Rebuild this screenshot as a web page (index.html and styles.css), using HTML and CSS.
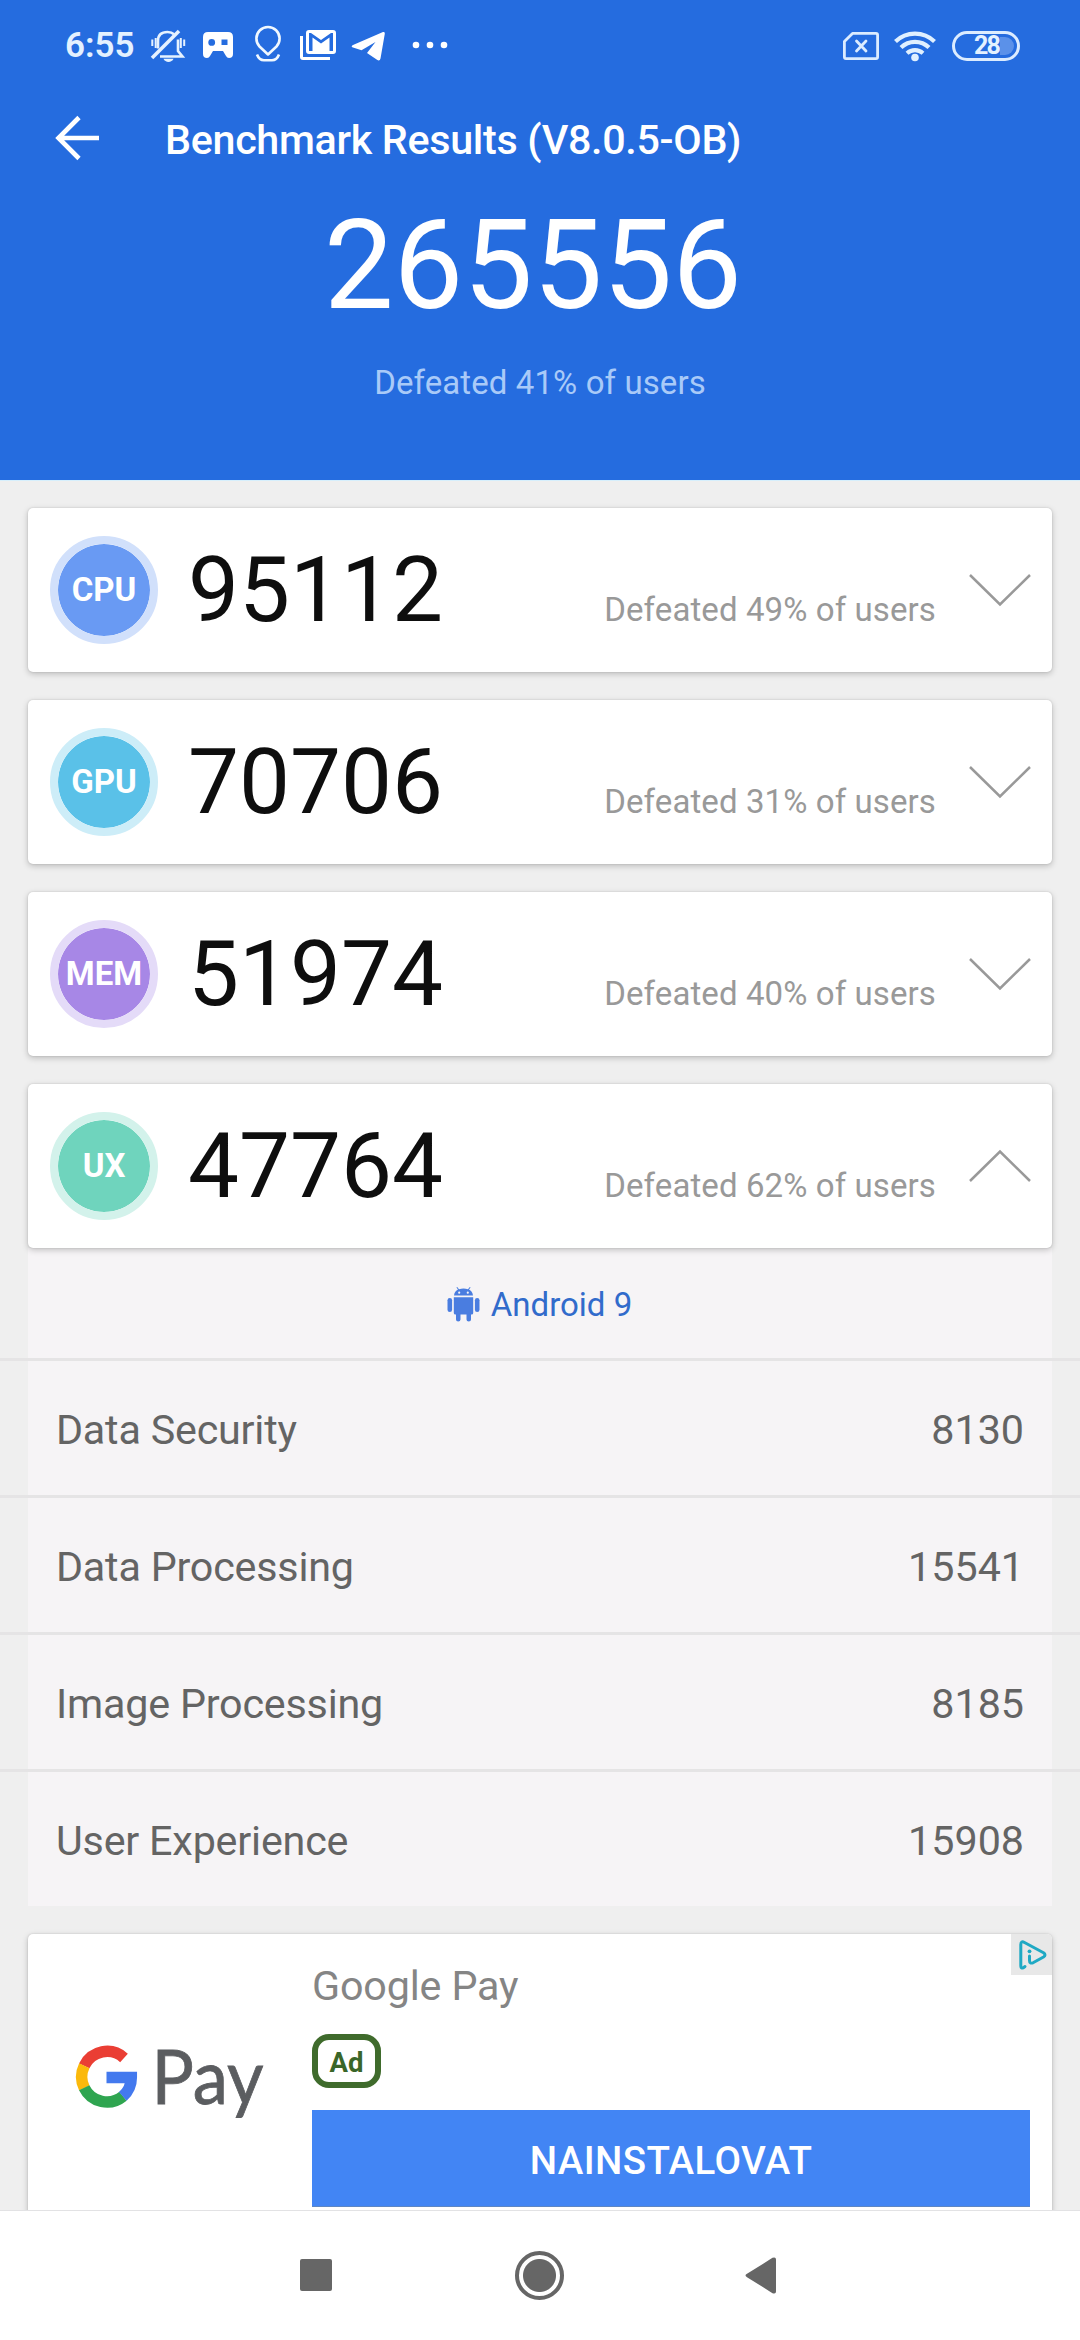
FILE: index.html
```html
<!DOCTYPE html>
<html lang="en">
<head>
<meta charset="utf-8">
<title>Benchmark Results</title>
<link rel="stylesheet" href="styles.css">
</head>
<body>
<div class="screen">
  <header class="hero">
    <div class="status">
      <span class="clock">6:55</span>
      <svg class="ic bell" width="36" height="34" viewBox="150 29 36 34" fill="none" stroke="#e6f2ff" stroke-width="2.6">
        <path d="M158 48.500V41C158 35 161.500 32 167.500 32C170.500 32 172.500 32.800 174 34.200M178 39.500V51L182.500 56.500H160"/>
        <path d="M152 58L179 31" stroke-width="3.600"/>
        <path d="M163.500 58.800H173.500C172 63 165 63 163.500 58.800Z" fill="#e6f2ff" stroke="none"/>
        <path d="M152.300 39.500V46M155.700 38V48M180.800 38V48M184.200 39.500V46" stroke-width="2"/>
      </svg>
      <svg class="ic pad" width="30" height="26" viewBox="203 32 30 26" fill="#fff">
        <path fill-rule="evenodd" d="M208 32H228Q233 32 233 37V54Q233 58 229 58Q227 58 226 56L223 51H213L210 56Q209 58 207 58Q203 58 203 54V37Q203 32 208 32ZM211.700 39A3.400 3.400 0 1 0 211.700 45.800A3.400 3.400 0 1 0 211.700 39ZM221.500 39.500V45H227.500V39.500Z"/>
      </svg>
      <svg class="ic pin" width="28" height="34" viewBox="254 28 28 34" fill="none" stroke="#f0f8ff" stroke-width="2.6">
        <path d="M268 54.500L259.500 46.500A11.600 11.600 0 1 1 276.500 46.500Z" stroke-linejoin="round"/>
        <path d="M257 54.500C258.500 58.500 261 60.200 264 60.200H272C275 60.200 277.500 58.500 279 54.500"/>
      </svg>
      <svg class="ic mail" width="36" height="30" viewBox="300 30 36 30" fill="#fff">
        <path d="M300 36H303V57H330V60H303Q300 60 300 57Z"/>
        <path fill-rule="evenodd" d="M309 30H333Q336 30 336 33V51Q336 54 333 54H309Q306 54 306 51V33Q306 30 309 30ZM309 33V51H312.500V37.500L321 43.500L329.500 37.500V51H333V33H331L321 40L311 33Z"/>
      </svg>
      <svg class="ic plane" width="34" height="30" viewBox="351 31 34 30" fill="#fff">
        <path d="M353 45L383 32Q385.200 31.500 384.800 33.800L380.500 58.500Q379.800 61.500 377 59.800L367 53L375.500 42L361.500 50.200L353 47.600Q350.300 46.400 353 45Z"/>
      </svg>
      <svg class="ic dots" width="36" height="8" viewBox="412 41 36 8" fill="#fff">
        <circle cx="416" cy="45" r="3.300"/><circle cx="430" cy="45" r="3.300"/><circle cx="444" cy="45" r="3.300"/>
      </svg>
      <span class="grow"></span>
      <svg class="ic sim" width="36" height="28" viewBox="843 32 36 28" fill="none" stroke="#dcecff" stroke-width="2.800" stroke-linejoin="round" stroke-linecap="round">
        <path d="M852.500 33.400H876Q877.600 33.400 877.600 35V57Q877.600 58.600 876 58.600H846Q844.400 58.600 844.400 57V41.500Z"/>
        <path d="M856.500 41L866 51M866 41L856.500 51"/>
      </svg>
      <svg class="ic wifi" width="42" height="31" viewBox="894 31 42 31" fill="none" stroke="#e0f0ff" stroke-width="4.200">
        <path d="M895.500 41.500A28 28 0 0 1 934.500 41.500M901 47.500A20 20 0 0 1 929 47.500M907 53.200A12 12 0 0 1 923 53.200"/>
        <circle cx="915" cy="57.500" r="3.800" fill="#e0f0ff" stroke="none"/>
      </svg>
      <span class="battery">28<i class="charge"></i></span>
    </div>
    <div class="titlebar">
      <svg class="back" width="46" height="46" viewBox="54 115 46 46" fill="none" stroke="#fff" stroke-width="4.600">
        <path d="M99 138H58.500M79 117.500L58.500 138L79 158.500"/>
      </svg>
      <h1 class="title">Benchmark Results (V8.0.5-OB)</h1>
    </div>
    <div class="total">265556</div>
    <div class="total-note">Defeated 41% of users</div>
  </header>

  <main class="content">
    <section class="card cpu">
      <span class="badge">CPU</span><span class="score">95112</span><span class="note">Defeated 49% of users</span>
      <svg class="chev" width="64" height="34" viewBox="0 0 64 34"><path d="M2 2L32 31.500L62 2"/></svg>
    </section>
    <section class="card gpu">
      <span class="badge">GPU</span><span class="score">70706</span><span class="note">Defeated 31% of users</span>
      <svg class="chev" width="64" height="34" viewBox="0 0 64 34"><path d="M2 2L32 31.500L62 2"/></svg>
    </section>
    <section class="card mem">
      <span class="badge">MEM</span><span class="score">51974</span><span class="note">Defeated 40% of users</span>
      <svg class="chev" width="64" height="34" viewBox="0 0 64 34"><path d="M2 2L32 31.500L62 2"/></svg>
    </section>
    <section class="card ux">
      <span class="badge">UX</span><span class="score">47764</span><span class="note">Defeated 62% of users</span>
      <svg class="chev" width="64" height="34" viewBox="0 0 64 34"><path d="M2 32L32 2.500L62 32"/></svg>
    </section>

    <div class="details">
      <div class="os">
        <svg width="33" height="35" viewBox="0 0 33 35" fill="#4a7de0">
          <path fill-rule="evenodd" d="M7 8.600C7.200 5.500 9 3.500 11 2.600L9.400 .400L10.200 0L12 2.200Q16.500 .800 21 2.200L22.800 0L23.600 .400L22 2.600C24 3.500 25.800 5.500 26 8.600ZM12.200 4.600A1.100 1.100 0 1 0 12.200 6.800A1.100 1.100 0 1 0 12.200 4.600ZM20.800 4.600A1.100 1.100 0 1 0 20.800 6.800A1.100 1.100 0 1 0 20.800 4.600Z"/>
          <path d="M6.800 10.200H26.200V26Q26.200 27.500 24.500 27.500H24V32.500Q24 34.600 21.800 34.600Q19.500 34.600 19.500 32.500V27.500H13.500V32.500Q13.500 34.600 11.200 34.600Q9 34.600 9 32.500V27.500H8.500Q6.800 27.500 6.800 26Z"/>
          <rect x=".500" y="11" width="4.600" height="14" rx="2.300"/><rect x="27.900" y="11" width="4.600" height="14" rx="2.300"/>
        </svg>
        <span>Android 9</span>
      </div>
      <div class="row"><span class="label">Data Security</span><span>8130</span></div>
      <div class="row"><span class="label">Data Processing</span><span>15541</span></div>
      <div class="row"><span class="label">Image Processing</span><span>8185</span></div>
      <div class="row"><span class="label">User Experience</span><span>15908</span></div>
    </div>

    <section class="ad">
      <svg class="gpay" width="200" height="110" viewBox="70 2025 200 110">
        <g fill="none" stroke-width="11.500">
          <path stroke="#ea3e34" d="M84.200 2065.900A25.300 25.300 0 0 1 124 2057.900"/>
          <path stroke="#fbb90b" d="M84.300 2087.900A25.300 25.300 0 0 1 84.300 2065.700"/>
          <path stroke="#2fa550" d="M123 2096.200A25.300 25.300 0 0 1 84.200 2087.700"/>
          <path stroke="#4379ee" d="M106.500 2077.500H131.300A25.300 25.300 0 0 1 122.800 2096.400"/>
        </g>
        <text class="pay" x="151.500" y="2104" textLength="112" lengthAdjust="spacingAndGlyphs">Pay</text>
      </svg>
      <div class="ad-body">
        <div class="ad-title">Google Pay</div>
        <span class="ad-tag">Ad</span>
        <div class="install">NAINSTALOVAT</div>
      </div>
      <span class="choices">
        <svg width="41" height="41" viewBox="0 0 41 41" fill="none" stroke="#1fa9c4" stroke-width="3" stroke-linecap="round" stroke-linejoin="round">
          <path d="M14 32.500Q9.800 36 9.800 31.500V10.500Q9.800 6.500 13.500 8.500L32.500 18.800Q35.500 21 32.500 23L22 28.800Q18.500 30 18.500 26.500V22"/>
          <circle cx="18.500" cy="17.300" r="1.900" fill="#1fa9c4" stroke="none"/>
        </svg>
      </span>
    </section>
  </main>

  <nav class="nav">
    <span class="recents"></span>
    <span class="home"></span>
    <svg class="prev" width="31" height="37" viewBox="0 0 31 37"><path d="M2 16.800L27.500 .800Q31 -.500 31 2.500V34.500Q31 37.500 27.500 36.200L2 20.200Q-1 18.500 2 16.800Z" fill="#666"/></svg>
  </nav>
</div>
</body>
</html>
```
FILE: styles.css
```css
* { box-sizing: border-box; }
body { margin: 0; background: #efefef; font-family: Roboto, "Liberation Sans", sans-serif; }
.screen { width: 1080px; height: 2340px; overflow: hidden; display: flex; flex-direction: column; }

.hero { flex: none; height: 481px; background: #256cdf; border-bottom: 1px solid #d6effc; color: #fff; }
.status { height: 90px; padding: 0 60px 0 65px; display: flex; align-items: flex-start; }
.ic { flex: none; overflow: visible; }
.clock { width: 85px; margin-top: 25px; line-height: 42px; font-size: 35px; font-weight: 600; color: #e4f1ff; white-space: nowrap; }
.bell { margin-top: 29px; }
.pad { margin: 32px 0 0 17px; }
.pin { margin: 28px 0 0 21px; }
.mail { margin: 30px 0 0 18px; }
.plane { margin: 31px 0 0 15px; }
.dots { margin: 41px 0 0 27px; }
.grow { flex: 1; }
.sim { margin: 32px 15px 0 0; }
.wifi { margin: 31px 16px 0 0; }
.battery { flex: none; width: 68px; height: 30px; margin-top: 31px; padding: 0 3px 0 19px; display: flex; align-items: center; border: 3px solid #dcecff; border-radius: 15px; font-size: 25px; font-weight: 700; line-height: 24px; color: #e4f1ff; letter-spacing: -1.8px; }
.charge { width: 17px; height: 18px; margin-left: 1px; border-radius: 0 9px 9px 0; background: #5b91e9; }

.titlebar { height: 96px; padding-left: 54px; display: flex; align-items: center; }
.back { flex: none; }
.title { margin: 3px 0 0 65px; font-size: 41.250px; font-weight: 500; line-height: 50px; letter-spacing: -.32px; white-space: nowrap; }
.total { margin-top: 7px; padding-right: 14px; height: 146px; line-height: 146px; text-align: center; font-size: 124px; }
.total-note { margin-top: 24px; line-height: 40px; text-align: center; font-size: 33px; letter-spacing: .1px; color: #a9caf8; }

.content { flex: 1; min-height: 0; overflow: hidden; padding-top: 27px; }
.card { position: relative; height: 164px; margin: 0 28px 28px; padding: 0 20px 0 22px; display: flex; align-items: center; background: #fff; border-radius: 5px; box-shadow: 0 2px 6px rgba(0,0,0,.22), 0 0 2px rgba(0,0,0,.14); }
.badge { flex: none; width: 108px; height: 108px; display: flex; align-items: center; justify-content: center; border-radius: 50%; border: 8px solid; background-clip: padding-box; color: #fff; font-size: 33px; font-weight: 700; line-height: 40px; }
.cpu .badge { background-color: #699af3; border-color: #d1e0fb; }
.gpu .badge { background-color: #5ac1e8; border-color: #cdedf8; }
.mem .badge { background-color: #a787e6; border-color: #e4dbf8; }
.ux .badge { background-color: #6fd4bd; border-color: #d3f2eb; }
.score { margin-left: 30px; font-size: 90.750px; line-height: 110px; color: #0e0e0e; }
.note { margin: 40px 32px 0 auto; font-size: 33px; line-height: 40px; letter-spacing: .1px; color: #999; white-space: nowrap; }
.chev { flex: none; fill: none; stroke: #999; stroke-width: 2.500; }

.details { margin-top: -28px; padding: 0 28px; background: linear-gradient(#f6f4f6, #f6f4f6) 28px 0 / 1024px 100% no-repeat; }
.os { height: 110px; padding: 3px 1px 0 0; display: flex; align-items: center; justify-content: center; gap: 11px; font-size: 33px; line-height: 40px; color: #316bcb; }
.row { height: 137px; margin: 0 -28px; padding: 3px 56px 0; border-top: 3px solid #e5e4e5; display: flex; align-items: center; justify-content: space-between; font-size: 41.250px; line-height: 50px; color: #646464; }
.label { letter-spacing: -.2px; }

.ad { position: relative; height: 310px; margin: 28px 28px 0; padding: 0 22px 0 42px; display: flex; background: #fff; border-radius: 5px; box-shadow: 0 2px 6px rgba(0,0,0,.22), 0 0 2px rgba(0,0,0,.14); }
.gpay { flex: none; margin: 91px 42px 0 0; overflow: visible; }
.pay { font-family: Lato, sans-serif; font-size: 75px; fill: #5b5d60; stroke: #5b5d60; stroke-width: .8px; }
.ad-body { flex: 1; display: flex; flex-direction: column; align-items: flex-start; }
.ad-title { margin-top: 27px; font-size: 41.250px; line-height: 50px; letter-spacing: -.15px; color: #858585; }
.ad-tag { width: 69px; height: 54px; margin-top: 23px; border: 6px solid #3f6b2c; border-radius: 17px; text-align: center; font-size: 27.500px; font-weight: 700; line-height: 45px; color: #3a6629; }
.install { align-self: stretch; height: 97px; margin-top: 22px; border-bottom: 1px solid #5d86c4; background: #4285f4; color: #fff; text-align: center; font-size: 38.500px; font-weight: 500; line-height: 101px; letter-spacing: .4px; }
.choices { position: absolute; top: 0; right: 0; width: 41px; height: 41px; background: #e8e8e8; border-top-right-radius: 5px; }

.nav { position: relative; flex: none; height: 130px; padding: 0 0 1px 300px; display: flex; align-items: center; background: #fff; border-top: 1px solid #e2e2e4; }
.recents { width: 32px; height: 32px; border-radius: 2px; background: #666; }
.home { width: 49px; height: 49px; margin-left: 183px; border: 4px solid #666; border-radius: 50%; background: radial-gradient(circle, #666 16px, transparent 17px); }
.prev { margin-left: 181px; }
```
